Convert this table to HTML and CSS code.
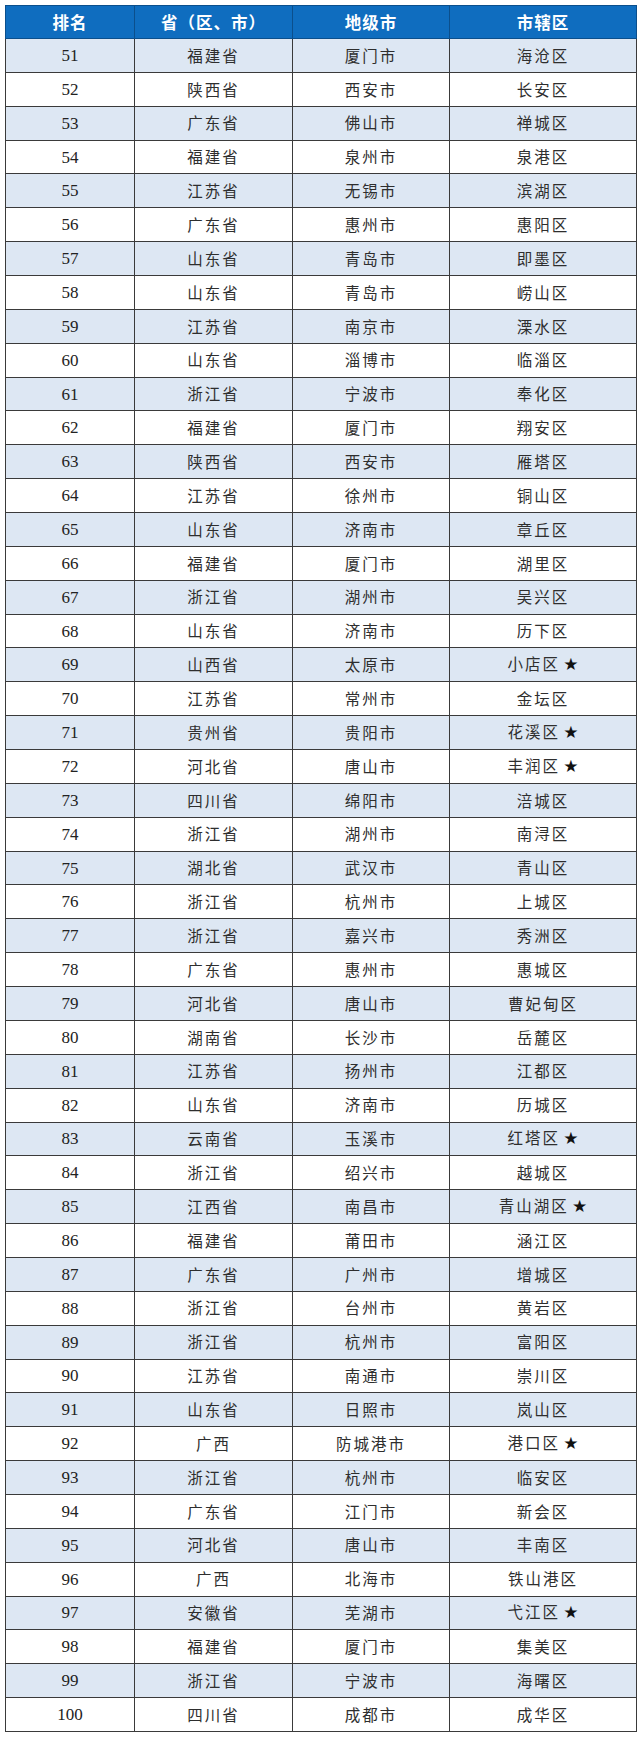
FILE: index.html
```html
<!DOCTYPE html>
<html lang="zh">
<head>
<meta charset="utf-8">
<link rel="stylesheet" href="styles.css">
</head>
<body>
<table class="rank">
<colgroup><col class="c1"><col class="c2"><col class="c3"><col class="c4"></colgroup>
<thead><tr><th>排名</th><th>省（区、市）</th><th>地级市</th><th>市辖区</th></tr></thead>
<tbody>
<tr><td class="n">51</td><td>福建省</td><td>厦门市</td><td>海沧区</td></tr>
<tr><td class="n">52</td><td>陕西省</td><td>西安市</td><td>长安区</td></tr>
<tr><td class="n">53</td><td>广东省</td><td>佛山市</td><td>禅城区</td></tr>
<tr><td class="n">54</td><td>福建省</td><td>泉州市</td><td>泉港区</td></tr>
<tr><td class="n">55</td><td>江苏省</td><td>无锡市</td><td>滨湖区</td></tr>
<tr><td class="n">56</td><td>广东省</td><td>惠州市</td><td>惠阳区</td></tr>
<tr><td class="n">57</td><td>山东省</td><td>青岛市</td><td>即墨区</td></tr>
<tr><td class="n">58</td><td>山东省</td><td>青岛市</td><td>崂山区</td></tr>
<tr><td class="n">59</td><td>江苏省</td><td>南京市</td><td>溧水区</td></tr>
<tr><td class="n">60</td><td>山东省</td><td>淄博市</td><td>临淄区</td></tr>
<tr><td class="n">61</td><td>浙江省</td><td>宁波市</td><td>奉化区</td></tr>
<tr><td class="n">62</td><td>福建省</td><td>厦门市</td><td>翔安区</td></tr>
<tr><td class="n">63</td><td>陕西省</td><td>西安市</td><td>雁塔区</td></tr>
<tr><td class="n">64</td><td>江苏省</td><td>徐州市</td><td>铜山区</td></tr>
<tr><td class="n">65</td><td>山东省</td><td>济南市</td><td>章丘区</td></tr>
<tr><td class="n">66</td><td>福建省</td><td>厦门市</td><td>湖里区</td></tr>
<tr><td class="n">67</td><td>浙江省</td><td>湖州市</td><td>吴兴区</td></tr>
<tr><td class="n">68</td><td>山东省</td><td>济南市</td><td>历下区</td></tr>
<tr><td class="n">69</td><td>山西省</td><td>太原市</td><td>小店区<span class="star">★</span></td></tr>
<tr><td class="n">70</td><td>江苏省</td><td>常州市</td><td>金坛区</td></tr>
<tr><td class="n">71</td><td>贵州省</td><td>贵阳市</td><td>花溪区<span class="star">★</span></td></tr>
<tr><td class="n">72</td><td>河北省</td><td>唐山市</td><td>丰润区<span class="star">★</span></td></tr>
<tr><td class="n">73</td><td>四川省</td><td>绵阳市</td><td>涪城区</td></tr>
<tr><td class="n">74</td><td>浙江省</td><td>湖州市</td><td>南浔区</td></tr>
<tr><td class="n">75</td><td>湖北省</td><td>武汉市</td><td>青山区</td></tr>
<tr><td class="n">76</td><td>浙江省</td><td>杭州市</td><td>上城区</td></tr>
<tr><td class="n">77</td><td>浙江省</td><td>嘉兴市</td><td>秀洲区</td></tr>
<tr><td class="n">78</td><td>广东省</td><td>惠州市</td><td>惠城区</td></tr>
<tr><td class="n">79</td><td>河北省</td><td>唐山市</td><td>曹妃甸区</td></tr>
<tr><td class="n">80</td><td>湖南省</td><td>长沙市</td><td>岳麓区</td></tr>
<tr><td class="n">81</td><td>江苏省</td><td>扬州市</td><td>江都区</td></tr>
<tr><td class="n">82</td><td>山东省</td><td>济南市</td><td>历城区</td></tr>
<tr><td class="n">83</td><td>云南省</td><td>玉溪市</td><td>红塔区<span class="star">★</span></td></tr>
<tr><td class="n">84</td><td>浙江省</td><td>绍兴市</td><td>越城区</td></tr>
<tr><td class="n">85</td><td>江西省</td><td>南昌市</td><td>青山湖区<span class="star">★</span></td></tr>
<tr><td class="n">86</td><td>福建省</td><td>莆田市</td><td>涵江区</td></tr>
<tr><td class="n">87</td><td>广东省</td><td>广州市</td><td>增城区</td></tr>
<tr><td class="n">88</td><td>浙江省</td><td>台州市</td><td>黄岩区</td></tr>
<tr><td class="n">89</td><td>浙江省</td><td>杭州市</td><td>富阳区</td></tr>
<tr><td class="n">90</td><td>江苏省</td><td>南通市</td><td>崇川区</td></tr>
<tr><td class="n">91</td><td>山东省</td><td>日照市</td><td>岚山区</td></tr>
<tr><td class="n">92</td><td>广西</td><td>防城港市</td><td>港口区<span class="star">★</span></td></tr>
<tr><td class="n">93</td><td>浙江省</td><td>杭州市</td><td>临安区</td></tr>
<tr><td class="n">94</td><td>广东省</td><td>江门市</td><td>新会区</td></tr>
<tr><td class="n">95</td><td>河北省</td><td>唐山市</td><td>丰南区</td></tr>
<tr><td class="n">96</td><td>广西</td><td>北海市</td><td>铁山港区</td></tr>
<tr><td class="n">97</td><td>安徽省</td><td>芜湖市</td><td>弋江区<span class="star">★</span></td></tr>
<tr><td class="n">98</td><td>福建省</td><td>厦门市</td><td>集美区</td></tr>
<tr><td class="n">99</td><td>浙江省</td><td>宁波市</td><td>海曙区</td></tr>
<tr><td class="n">100</td><td>四川省</td><td>成都市</td><td>成华区</td></tr>
</tbody>
</table>
</body>
</html>
```
FILE: styles.css
```css
html, body {
  margin: 0;
  padding: 0;
  background: #ffffff;
}
body {
  padding: 5px 0 0 5px;
}
.rank {
  border-collapse: collapse;
  table-layout: fixed;
  width: 631px;
  font-family: "Noto Sans CJK SC", "Liberation Serif", sans-serif;
}
.c1 { width: 129px; }
.c2 { width: 158px; }
.c3 { width: 157px; }
.c4 { width: 187px; }
.rank th {
  height: 32px;
  padding: 0;
  background: #0f6dbf;
  color: #ffffff;
  font-weight: 700;
  font-size: 16.5px;
  letter-spacing: 1px;
  border: 1px solid #0b4f8c;
  text-align: center;
  vertical-align: middle;
}
.rank td {
  height: 32.86px;
  padding: 0;
  border: 1px solid #3a3a3a;
  text-align: center;
  vertical-align: middle;
  color: #2e2e2e;
  font-size: 15.5px;
  font-weight: 400;
  letter-spacing: 2px;
  line-height: 1;
}
.rank td.n {
  font-family: "Liberation Serif", serif;
  font-size: 17px;
  letter-spacing: 0;
  color: #222;
}
.rank tbody tr:nth-child(odd) td {
  background: #dde7f3;
}
.star {
  color: #111;
  font-family: "DejaVu Sans", sans-serif;
  font-size: 17px;
  margin-left: 3px;
  letter-spacing: 0;
}
```
